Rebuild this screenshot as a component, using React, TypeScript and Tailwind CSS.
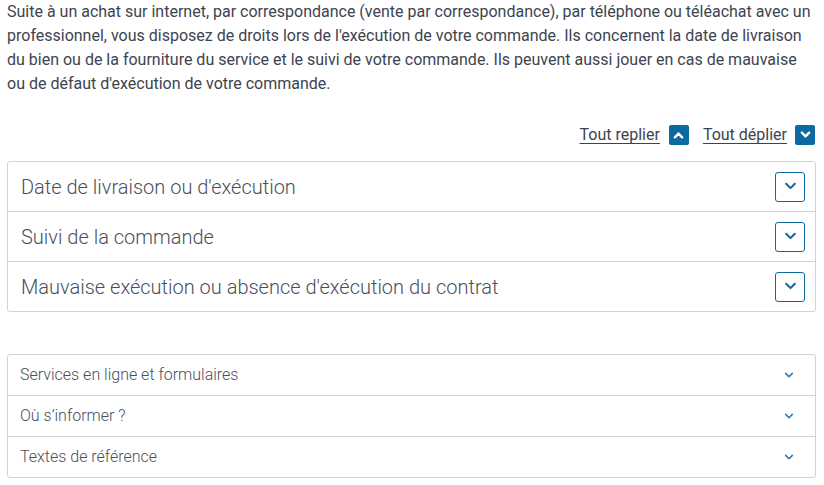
import React from "react";

const Chevron: React.FC<{ up?: boolean; className?: string; stroke?: number }> = ({ up, className, stroke = 2.4 }) => (
  <svg viewBox="0 0 12 8" className={className} fill="none" stroke="currentColor" strokeWidth={stroke} strokeLinecap="round" strokeLinejoin="round">
    {up ? <path d="M2 6.5 6 2.5 10 6.5" /> : <path d="M2 1.5 6 5.5 10 1.5" />}
  </svg>
);

const mainItems = [
  "Date de livraison ou d'exécution",
  "Suivi de la commande",
  "Mauvaise exécution ou absence d'exécution du contrat",
];

const moreItems = ["Services en ligne et formulaires", "Où s’informer ?", "Textes de référence"];

const App: React.FC = () => {
  return (
    <div className="w-[824px] h-[485px] bg-white pl-[7px] pr-[8px] font-['Roboto',sans-serif] text-[#3e4350]">
      <p className="text-[16px] leading-[24px]">
        Suite à un achat sur internet, par correspondance (vente par correspondance), par téléphone ou téléachat avec un
        professionnel, vous disposez de droits lors de l'exécution de votre commande. Ils concernent la date de livraison
        du bien ou de la fourniture du service et le suivi de votre commande. Ils peuvent aussi jouer en cas de mauvaise
        ou de défaut d'exécution de votre commande.
      </p>

      <div className="mt-[29px] mb-[16px] flex h-[20px] items-center justify-end gap-[14px] pr-[1px] text-[16px]">
        <div className="flex items-center gap-[9px]">
          <span className="underline underline-offset-[3px] decoration-1">Tout replier</span>
          <span className="flex h-[20px] w-[20px] items-center justify-center rounded-[2px] bg-[#0b69a3] text-white">
            <Chevron up className="w-[11px] h-[8px]" stroke={2.6} />
          </span>
        </div>
        <div className="flex items-center gap-[8px]">
          <span className="underline underline-offset-[3px] decoration-1">Tout déplier</span>
          <span className="flex h-[20px] w-[20px] items-center justify-center rounded-[2px] bg-[#0b69a3] text-white">
            <Chevron className="w-[11px] h-[8px]" stroke={2.6} />
          </span>
        </div>
      </div>

      <div className="rounded-[3px] border border-[#d2d2d2]">
        {mainItems.map((t, i) => (
          <div
            key={t}
            className={`flex items-center justify-between pl-[13px] pr-[10px] ${i > 0 ? "h-[50px] border-t border-[#d2d2d2]" : "h-[49px]"}`}
          >
            <span className="text-[20px] font-light text-[#4a4f5a]">{t}</span>
            <span className="flex h-[30px] w-[30px] items-center justify-center rounded-[3px] border border-[#0b69a3] text-[#0b69a3]">
              <Chevron className="w-[13px] h-[9px]" stroke={1.9} />
            </span>
          </div>
        ))}
      </div>

      <div className="mt-[42px] rounded-[3px] border border-[#d2d2d2]">
        {moreItems.map((t, i) => (
          <div
            key={t}
            className={`flex items-center justify-between pl-[12px] pr-[21px] ${i > 0 ? "h-[41px] border-t border-[#d2d2d2]" : "h-[40px]"}`}
          >
            <span className="text-[16px] font-light text-[#4a4f5a]">{t}</span>
            <Chevron className="w-[10px] h-[7px] text-[#2a7ab8]" stroke={1.9} />
          </div>
        ))}
      </div>
    </div>
  );
};

export default App;
